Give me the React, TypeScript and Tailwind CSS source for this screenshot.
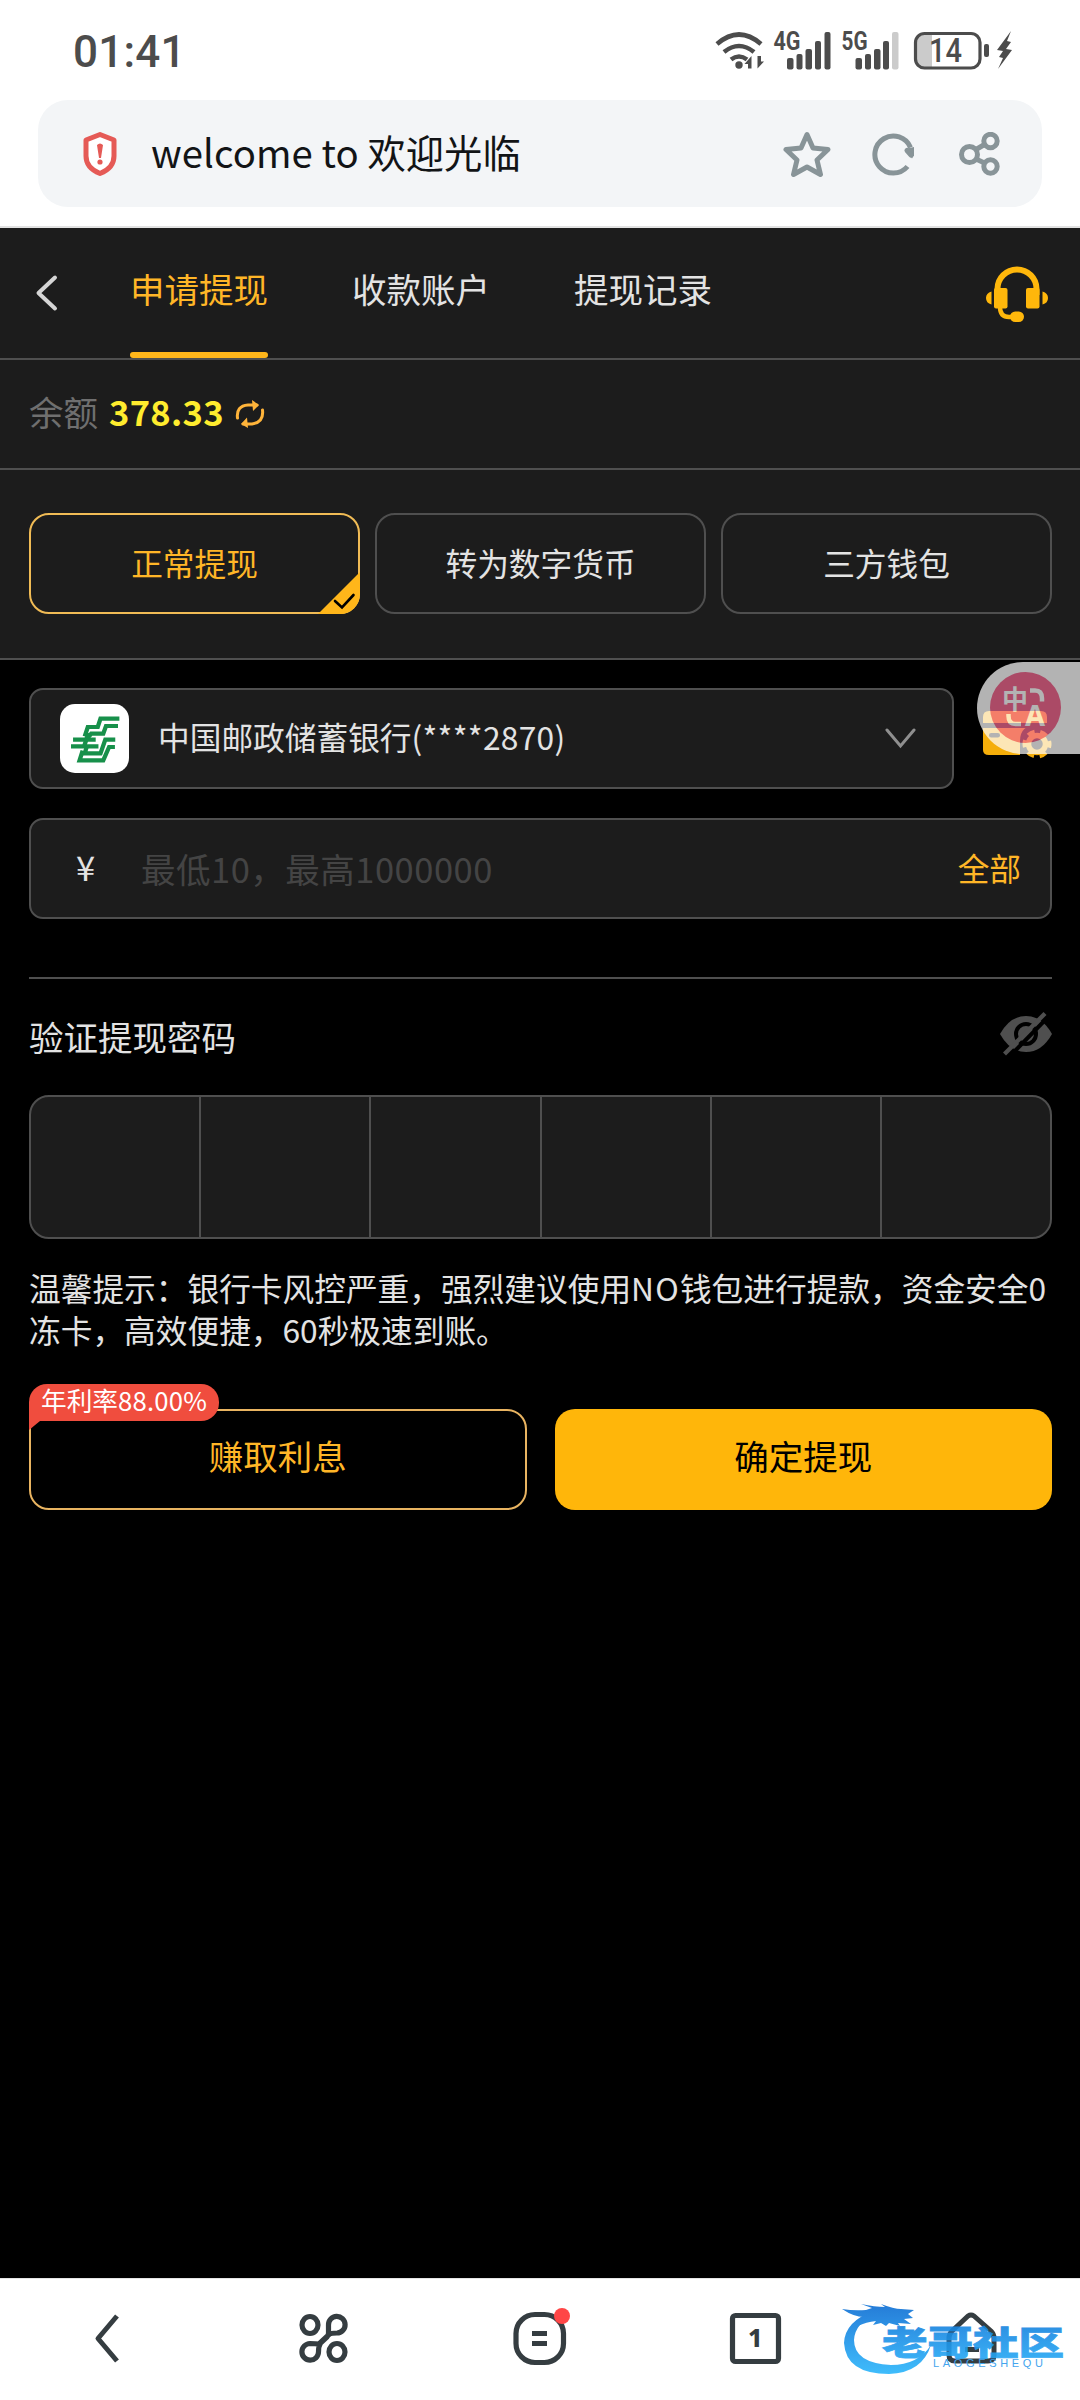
import React, { useState } from 'react';

const tabs = ['申请提现', '收款账户', '提现记录'];
const methods = ['正常提现', '转为数字货币', '三方钱包'];

function StatusBar() {
    return (
        <div className="flex h-[100px] items-start pl-[73px] pr-[67px] text-[#4c4c4c]">
            <span className="mt-[26px] font-[Roboto] text-[44px] leading-[52px] font-medium tracking-[0.2px]">01:41</span>
            <svg className="mt-[20px] ml-auto" width="300" height="56" viewBox="713 20 300 56" fill="none">
                {/* wifi */}
                <g stroke="#4c4c4c" strokeWidth="4.6">
                    <path d="M717 44q22-19 44 0" />
                    <path d="M724 52q15-12 30 0" />
                    <path d="M731 59.500q8-6 16 0" />
                </g>
                <circle cx="739" cy="65" r="3.700" fill="#4c4c4c" />
                <path d="M744.500 64l7-8v12.500h-3.500V64zM764 61.500l-6.500 7V56h3.500v5.500z" fill="#4c4c4c" />
                {/* 4G */}
                <text x="773.500" y="50" fontFamily="Roboto" fontWeight="700" fontSize="25.500" textLength="27" lengthAdjust="spacingAndGlyphs" fill="#4c4c4c">4G</text>
                <g fill="#4c4c4c">
                    <rect x="787" y="58" width="6.500" height="11.500" rx="2" />
                    <rect x="796.500" y="54" width="6" height="15.500" rx="2" />
                    <rect x="805.500" y="49" width="6.500" height="20.500" rx="2" />
                    <rect x="815" y="41" width="6" height="28.500" rx="2" />
                    <rect x="824.500" y="32" width="6" height="37.500" rx="2" />
                </g>
                {/* 5G */}
                <text x="841.500" y="50" fontFamily="Roboto" fontWeight="700" fontSize="25.500" textLength="26" lengthAdjust="spacingAndGlyphs" fill="#4c4c4c">5G</text>
                <g fill="#4c4c4c">
                    <rect x="855.500" y="58" width="6.500" height="11.500" rx="2" />
                    <rect x="865" y="54" width="6" height="15.500" rx="2" />
                    <rect x="874" y="49" width="6.500" height="20.500" rx="2" />
                    <rect x="883" y="41" width="6" height="28.500" rx="2" />
                    <rect x="892" y="32" width="6.500" height="37.500" rx="2" fill="#cbcbcb" />
                </g>
                {/* battery */}
                <path d="M932 33h-8q-9 0-9 9v17q0 9 9 9h8z" fill="#cbcbcb" />
                <rect x="915.500" y="33.500" width="64.500" height="34.500" rx="9" stroke="#4c4c4c" strokeWidth="3.200" />
                <text x="929" y="62" fontFamily="Roboto" fontWeight="500" fontSize="32.500" textLength="33" lengthAdjust="spacingAndGlyphs" fill="#4c4c4c">14</text>
                <rect x="984" y="44" width="5" height="13" rx="2" fill="#4c4c4c" />
                <path d="M1011 31L997 50l6 1-4 6 4 1-5 11 14-19-6-1 5-7-4-1z" fill="#4c4c4c" />
            </svg>
        </div>
    );
}

function AddressBar() {
    return (
        <div className="mx-[38px] flex h-[107px] items-center rounded-[30px] bg-[#f3f5f7] pr-[41px] pl-[45px]">
            <svg width="34" height="44" viewBox="0 0 34 44" className="shrink-0">
                <path d="M17 2.500L31 8v16q0 12-14 17.500Q3 36 3 24V8z" fill="#fff" stroke="#e55a56" strokeWidth="5" strokeLinejoin="round" />
                <path d="M14 13q3-3 6 0l-2 13h-2z" fill="#e55a56" />
                <circle cx="17" cy="30" r="2.600" fill="#e55a56" />
            </svg>
            <span className="mb-[3px] ml-[34px] text-[38.3px] leading-[50px] whitespace-pre text-[#121416]">
                <span className="tracking-[0.1px]">welcome to </span>欢迎光临
            </span>
            <svg className="ml-auto" width="48" height="48" viewBox="0 0 48 48" fill="none" stroke="#889498" strokeWidth="5" strokeLinejoin="round">
                <path d="M24 4.500l6 13.500 15 1.500-11 10.500 3.500 14.500L24 37l-13.500 7.500L14 30 3 19.500 18 18z" />
            </svg>
            <svg className="ml-[41px]" width="44" height="44" viewBox="0 0 44 44" fill="none" stroke="#889498" strokeWidth="5">
                <path d="M35.500 34.500A18.500 18.500 0 1 1 38.500 15.500" />
                <path d="M32.500 17l9.500-2v8.500l-2 3z" fill="#889498" stroke="none" />
                <path d="M35 18.500l4 4.500" strokeLinecap="round" />
            </svg>
            <svg className="ml-[43px]" width="42" height="44" viewBox="0 0 42 44" fill="none" stroke="#889498" strokeWidth="5">
                <circle cx="10.500" cy="22.500" r="8" />
                <circle cx="31.500" cy="9" r="6.700" />
                <circle cx="31.500" cy="34.500" r="6.700" />
                <path d="M17 17.500l8.500-5M17 27l8.500 4" />
            </svg>
        </div>
    );
}

function TabHeader({ active, onChange }: { active: number; onChange: (i: number) => void }) {
    return (
        <div className="flex h-[132px] border-b-2 border-[#4f4f4f] pr-[31px] pl-[34px]">
            <svg className="mt-[45px]" width="25" height="40" viewBox="0 0 25 40" fill="none" stroke="#d5d5d5" strokeWidth="4" strokeLinecap="round" strokeLinejoin="round">
                <path d="M21 4.500L4.500 20 21 35.500" />
            </svg>
            <div className="ml-[71px] flex gap-[84px]">
                {tabs.map((tab, i) => (
                    <button
                        key={tab}
                        onClick={() => onChange(i)}
                        className={`flex h-full flex-col items-center justify-between pt-[35px] text-[34.5px] leading-[50px] ${i === active ? 'text-[#ffb627]' : 'text-[#e3e3e3]'}`}
                    >
                        {tab}
                        {i === active && <span className="h-[6px] w-full rounded-full bg-[#ffb61a]" />}
                    </button>
                ))}
            </div>
            <svg className="mt-[37px] ml-auto" width="64" height="58" viewBox="0 0 64 58" fill="#ffb70b">
                <path d="M12.500 30V24a19.500 19.500 0 0 1 39 0v6" fill="none" stroke="#ffb70b" strokeWidth="6" />
                <rect x="9" y="23" width="13.500" height="20.500" rx="2" />
                <rect x="41" y="23" width="13.500" height="20.500" rx="2" />
                <path d="M6.500 26.500v13Q1 38 1 33t5.500-6.500zM57.500 26.500v13Q63 38 63 33t-5.500-6.500z" />
                <path d="M15 42q0 10 9 10h8" fill="none" stroke="#ffb70b" strokeWidth="4.400" />
                <rect x="25" y="46.500" width="14" height="10.500" rx="5.200" />
            </svg>
        </div>
    );
}

function PostBankLogo() {
    return (
        <svg className="shrink-0 rounded-[15px] bg-white" width="69" height="69" viewBox="0 0 201 207" preserveAspectRatio="none">
            <g fill="none" stroke="#17904a" strokeWidth="12.500">
                <path d="M173 44H118L110 69H81L72 97" />
                <path d="M169 66H134L126 89H91L80 103" />
                <path d="M161 107H132L118 148H72L78 128" />
                <path d="M104 107H38M32 127H112" />
                <path d="M160 129H143L126 169H57L66 140" />
                <path d="M83 87L70 128" />
            </g>
        </svg>
    );
}

// bank card manager, partly hidden by the floating translate button
function CardManager() {
    return (
        <div className="relative h-[96px] w-[103px] shrink-0">
            <svg className="absolute top-[49px] left-[6px]" width="72" height="50" viewBox="0 0 72 50">
                <path d="M6 0h52q6 0 6 6v6H0V6q0-6 6-6zM0 17h64v22q0 5-5 5H6q-6 0-6-5z" fill="#f5ae0a" />
                <rect x="6" y="22" width="11" height="4.500" rx="2.200" fill="#000" />
                <path d="M37 44V30q0-16 17-16h18v30z" fill="#000" />
                <circle cx="54" cy="33" r="8.500" fill="none" stroke="#f5ae0a" strokeWidth="5.500" />
                <circle cx="54" cy="33" r="12" fill="none" stroke="#f5ae0a" strokeWidth="5" strokeDasharray="7 5.566" strokeDashoffset="-9.100" />
            </svg>
            <div className="relative h-[92px] rounded-l-[46px] bg-white pt-[10px] pl-[13px] opacity-70">
                <svg width="71" height="71" viewBox="0 0 71 71">
                    <circle cx="35.500" cy="35.500" r="35.500" fill="#f46a92" />
                    <text x="12" y="37" fontFamily="Noto Sans CJK SC" fontWeight="700" fontSize="26" fill="#fff">中</text>
                    <text x="35" y="54" fontFamily="Noto Sans" fontWeight="700" fontSize="29" fill="#fff">A</text>
                    <path d="M40 18.500h5q7 0 7 8v3M18.500 42v2q0 8 7 8H31" fill="none" stroke="#fff" strokeWidth="4.500" />
                </svg>
            </div>
        </div>
    );
}

function BottomNav() {
    return (
        <div className="relative h-[122px] border-t border-[#e4e4e4] bg-white text-[#353d41]">
            <div className="-ml-[1px] grid w-full grid-cols-5 justify-items-center pt-[31px]">
                <svg width="58" height="58" viewBox="78 2310 58 58" fill="none" stroke="currentColor" strokeWidth="5" strokeLinejoin="round">
                    <path d="M117 2316L98 2338.500l19 22.500" />
                </svg>
                <svg width="58" height="58" viewBox="294 2310 58 58" fill="none" stroke="currentColor" strokeWidth="5.200">
                    <ellipse cx="310" cy="2325" rx="8" ry="8.500" />
                    <ellipse cx="337" cy="2352" rx="8" ry="8.500" />
                    <path d="M328.500 2333v-8a8.300 8.300 0 1 1 8.500 8q-6 0-8 1.500L319 2344q-3-.500-9-.500a8.300 8.300 0 1 0 8.500 8.500q0-6 2-9L327 2337q1.500-2 1.500-4z" />
                </svg>
                <svg className="overflow-visible" width="58" height="58" viewBox="510 2310 58 58" fill="none" stroke="currentColor" strokeWidth="5.200">
                    <rect x="516" y="2314.500" width="47.500" height="48" rx="19" />
                    <path d="M532 2333.500h15M532 2343.500h15" />
                    <circle cx="562" cy="2316" r="8" fill="#ff4646" stroke="none" />
                </svg>
                <svg width="58" height="58" viewBox="726 2310 58 58" fill="none" stroke="currentColor" strokeWidth="5.200">
                    <rect x="732.500" y="2315.500" width="46" height="46" rx="3" />
                    <text x="755.300" y="2347" fontFamily="Noto Sans" fontWeight="800" fontSize="25" textAnchor="middle" fill="currentColor" stroke="none">1</text>
                </svg>
                <svg width="58" height="58" viewBox="942 2310 58 58" fill="none" stroke="currentColor" strokeWidth="5" strokeLinejoin="round">
                    <path d="M968 2316q3-2 6 0l17 15q3 3 3 7v17q0 6-6 6h-33q-6 0-6-6v-17q0-4 3-7z" />
                    <path d="M965 2349.500h14" />
                </svg>
            </div>
            <svg className="absolute top-[20px] right-[10px]" width="230" height="80" viewBox="840 2299 230 80">
                <defs>
                    <linearGradient id="wave" gradientUnits="userSpaceOnUse" x1="0" y1="2308" x2="0" y2="2374">
                        <stop offset="0" stopColor="#0f72d6" />
                        <stop offset="1" stopColor="#2bb6fc" />
                    </linearGradient>
                </defs>
                <g fill="url(#wave)" opacity=".9">
                    <path d="M874 2311q-29 10-30 32 2 31 45 31 33-1 42-29-13 20-40 20-37-2-37-25 1-18 24-26z" />
                    <path d="M842 2309q12 2 24 1l6-2-11-4q14 3 24 3l-4-3q13 5 20 5l13 1-6 4 5 4-9 1 7 5-13-1 2 3-11-3-3 3-5-3-8 2 3-4q-10 1-18 5 2-7 6-9-10 0-22-8z" />
                    <text x="882" y="2354.500" fontFamily="Noto Sans CJK SC" fontWeight="900" fontSize="33" textLength="182" lengthAdjust="spacingAndGlyphs" stroke="url(#wave)" strokeWidth="0.8">老哥社区</text>
                </g>
                <text x="933" y="2367" fontFamily="Liberation Sans" fontSize="11" textLength="110" fill="#45a5ee">LAOGESHEQU</text>
            </svg>
        </div>
    );
}

export default function App() {
    const [activeTab, setActiveTab] = useState(0);
    const [method, setMethod] = useState(0);

    return (
        <div className="flex h-[2400px] w-[1080px] flex-col overflow-hidden bg-white font-['Noto_Sans_CJK_SC',sans-serif]">
            <StatusBar />
            <AddressBar />
            <div className="mt-[19px] h-[2px] shrink-0 bg-[#e2e2e2]" />

            <main className="flex-1 bg-black text-[#e3e3e3]">
                <div className="bg-[#1c1c1c]">
                    <TabHeader active={activeTab} onChange={setActiveTab} />
                    <div className="flex h-[110px] items-center border-b-2 border-[#4f4f4f] px-[29px] text-[34.5px] leading-[50px]">
                        <span className="mb-[7px] text-[#6f6f6f]">余额</span>
                        <span className="mb-[7px] ml-[11px] font-bold tracking-[0.3px] text-[#ffec2e]">378.33</span>
                        <svg className="ml-[11px]" width="30" height="30" viewBox="0 0 30 30" fill="none" stroke="#ffb43a" strokeWidth="3">
                            <path d="M2.500 19Q1 7 13 6h9M27.500 11Q29 23 17 25H8" strokeLinecap="round" />
                            <path d="M17 1l7 5-6 6zM12 18.500L6 25l7 4z" fill="#ffb43a" stroke="none" />
                        </svg>
                    </div>
                    <div className="grid h-[190px] grid-cols-3 gap-[15px] border-b-2 border-[#4f4f4f] pt-[43px] pr-[28px] pb-[44px] pl-[29px]">
                        {methods.map((name, i) => (
                            <button
                                key={name}
                                onClick={() => setMethod(i)}
                                className={`relative h-[101px] rounded-[20px] border-2 pb-[1px] text-[31.7px] ${i === method ? 'border-[#f0bb55] text-[#ffb627]' : 'border-[#4f4f4f] text-[#e3e3e3]'}`}
                            >
                                {name}
                                {i === method && (
                                    <svg className="absolute -right-[2px] -bottom-[2px] rounded-br-[20px]" width="42" height="42" viewBox="0 0 42 42">
                                        <path d="M42 0v42H0z" fill="#ffb61a" />
                                        <path d="M17 29l7 6.500L35.500 23" fill="none" stroke="#000" strokeWidth="2.600" strokeLinecap="round" />
                                    </svg>
                                )}
                            </button>
                        ))}
                    </div>
                </div>

                <div className="flex pt-[2px] pl-[29px]">
                    <div className="mt-[26px] flex h-[101px] w-[925px] items-center rounded-[14px] border-2 border-[#4f4f4f] bg-[#1c1c1c] pr-[36px] pl-[29px]">
                        <PostBankLogo />
                        <span className="mb-[5px] ml-[29px] text-[31.7px] leading-[46px]">
                            中国邮政储蓄银行<span className="tracking-[0.3px]">(****2870)</span>
                        </span>
                        <svg className="ml-auto" width="31" height="21" viewBox="0 0 31 21" fill="none" stroke="#8f8f8f" strokeWidth="3" strokeLinecap="round">
                            <path d="M2 2l13.500 16L29 2" />
                        </svg>
                    </div>
                    <div className="ml-[23px]">
                        <CardManager />
                    </div>
                </div>

                <div className="pr-[28px] pl-[29px]">
                    <div className="mt-[29px] flex h-[101px] items-center rounded-[14px] border-2 border-[#4f4f4f] bg-[#1c1c1c] pr-[29px] pl-[45px]">
                        <span className="mb-[5px] w-[65px] text-[34.5px] leading-[50px]">¥</span>
                        <input
                            placeholder="最低10，最高1000000"
                            className="mb-[2px] min-w-0 flex-1 bg-transparent text-[34.5px] leading-[50px] tracking-[0.5px] outline-none placeholder:text-[#444]"
                        />
                        <button className="mb-[4px] text-[31.7px] leading-[46px] text-[#ffb627]">全部</button>
                    </div>

                    <div className="mt-[58px] h-[2px] bg-[#4f4f4f]" />

                    <div className="mt-[32px] flex h-[50px] items-center justify-between">
                        <span className="text-[34.5px] leading-[50px]">验证提现密码</span>
                        <svg className="mb-[4px]" width="52" height="44" viewBox="0 0 52 44">
                            <path d="M0 22Q10 4 26 4t26 18Q42 40 26 40T0 22z" fill="#4f4f4f" />
                            <circle cx="26" cy="22" r="10" fill="none" stroke="#000" strokeWidth="4" />
                            <path d="M9 45L50 3" stroke="#000" strokeWidth="4" />
                            <path d="M4.500 42L45 1.500" stroke="#4f4f4f" strokeWidth="4.200" />
                        </svg>
                    </div>

                    <div className="mt-[34px] grid h-[144px] grid-cols-[170px_170px_171px_170px_170px_1fr] overflow-hidden rounded-[20px] border-2 border-[#4f4f4f] bg-[#1c1c1c]">
                        {[0, 1, 2, 3, 4, 5].map((n) => (
                            <div key={n} className="border-r-2 border-[#4f4f4f] last:border-r-0" />
                        ))}
                    </div>

                    <p className="mt-[27px] text-[31.7px] leading-[42px] whitespace-nowrap">
                        温馨提示：银行卡风控严重，强烈建议使用<span className="tracking-[1.2px]">NO</span>钱包进行提款，资金安全0
                        <br />
                        冻卡，高效便捷，60秒极速到账。
                    </p>

                    <div className="mt-[59px] grid grid-cols-2 gap-[28px] text-[34.5px]">
                        <button className="relative h-[101px] rounded-[20px] border-2 border-[#e9b461] pb-[7px] text-[#ffb627]">
                            赚取利息
                            <span className="absolute -top-[27px] -left-[2px] flex h-[37px] w-[190px] items-center rounded-t-[18px] rounded-r-[18px] bg-[#f04d3e] pb-[5px] pl-[12px] text-[25.7px] whitespace-nowrap text-white">
                                年利率<span className="tracking-[0.2px]">88.00%</span>
                                <svg className="absolute top-[37px] left-0" width="11" height="9" viewBox="0 0 11 9">
                                    <path d="M0 0h11L0 9z" fill="#f04d3e" />
                                </svg>
                            </span>
                        </button>
                        <button className="h-[101px] rounded-[20px] bg-[#ffb60a] pb-[7px] text-black">确定提现</button>
                    </div>
                </div>
            </main>

            <BottomNav />
        </div>
    );
}
